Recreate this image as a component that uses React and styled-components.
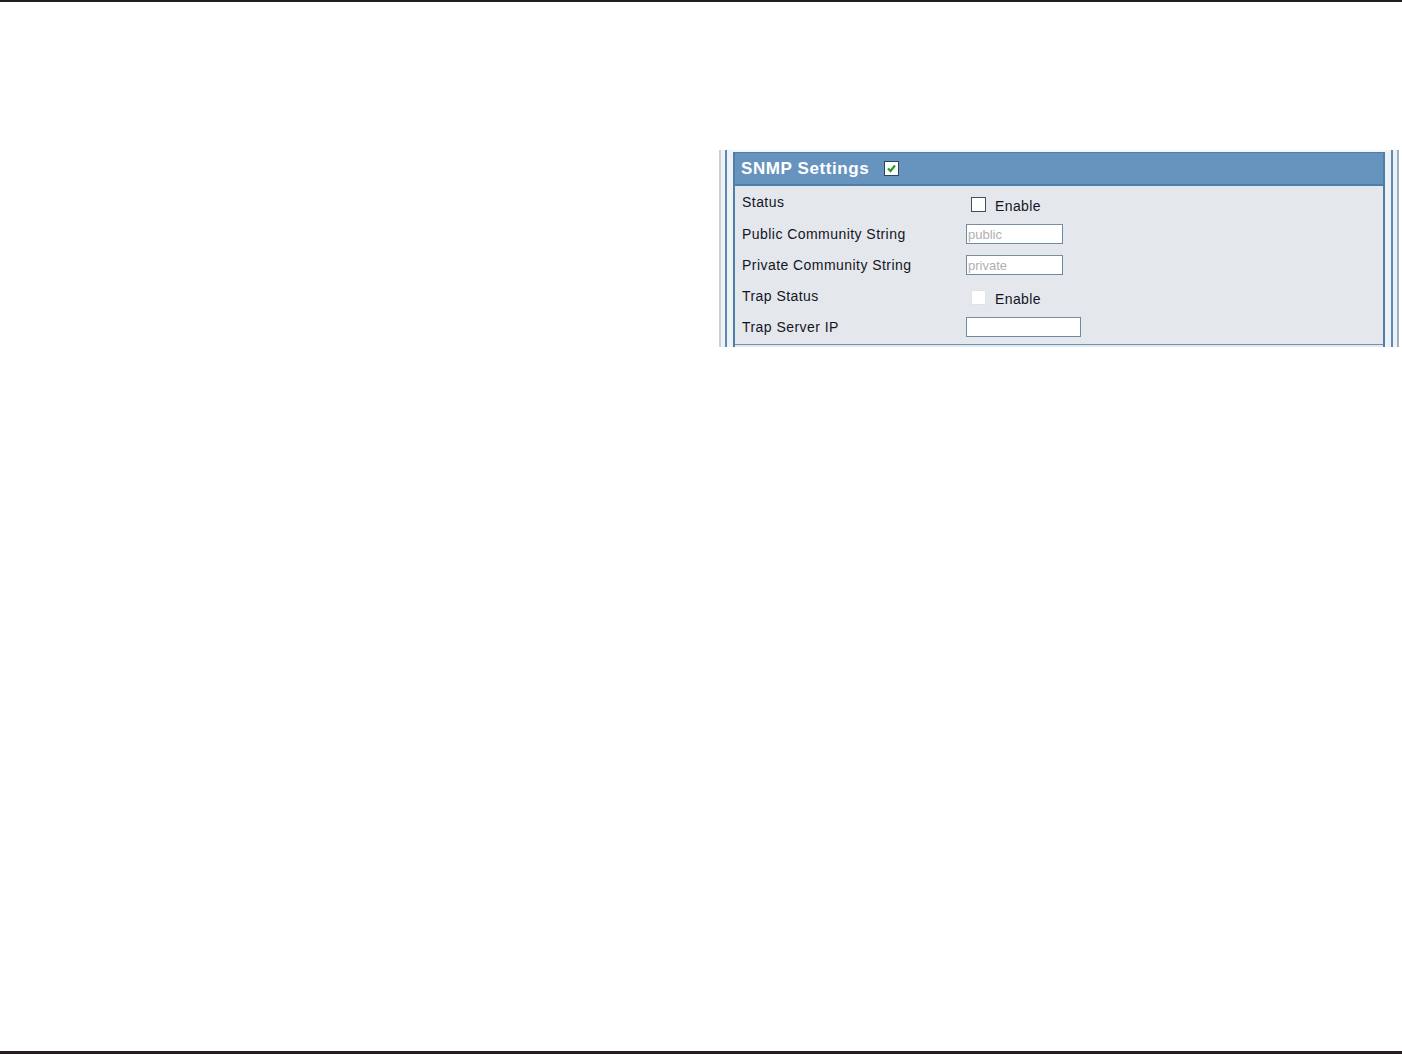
import styled, { createGlobalStyle } from "styled-components";

const Global = createGlobalStyle`
  html, body {
    margin: 0;
    padding: 0;
    background: #ffffff;
  }
  body {
    font-family: "Liberation Sans", Arial, sans-serif;
  }
`;

const Page = styled.div`
  width: 1402px;
  height: 1054px;
  display: flex;
  flex-direction: column;
  box-sizing: border-box;
  border-top: 2px solid #231f20;
  border-bottom: 3px solid #231f20;
`;

const Content = styled.div`
  flex: 1;
  display: flex;
  justify-content: flex-end;
  padding: 148px 3px 0 0;
`;

const Frame = styled.div`
  width: 680px;
  height: 197px;
  display: flex;
  box-sizing: border-box;
  background: #f3f6f8;
  border-left: 2px solid #c8d0d6;
  border-right: 2px solid #9fb0c0;
  align-self: flex-start;
`;

const Rail = styled.div`
  width: 12px;
  display: flex;
  justify-content: center;
  background: #eef2f5;
  &::before {
    content: "";
    width: 2px;
    margin-left: ${(p) => p.shift}px;
    background: #5d8ab4;
  }
`;

const Panel = styled.div`
  flex: 1;
  display: flex;
  flex-direction: column;
  box-sizing: border-box;
  border: 2px solid #4f7ea9;
  border-top: 0;
  border-bottom: 0;
  background: #e4e8ec;
  margin-top: 2px;
`;

const Header = styled.div`
  height: 31px;
  display: flex;
  align-items: center;
  gap: 15px;
  padding: 0 6px;
  background: #6794bf;
  border-top: 1px solid #4f7ea9;
  border-bottom: 2px solid #4f7ea9;
  color: #ffffff;
  font-size: 17px;
  font-weight: bold;
  letter-spacing: 0.6px;
`;

const HeadCheck = styled.span`
  width: 13px;
  height: 13px;
  display: flex;
  align-items: center;
  justify-content: center;
  background: #ffffff;
  border: 1px solid #28465f;
`;

const Body = styled.div`
  display: grid;
  grid-template-columns: 224px 1fr;
  grid-auto-rows: 31px;
  padding: 3px 7px 0;
  border-bottom: 1px solid #6a93b8;
`;

const Label = styled.div`
  font-size: 14px;
  letter-spacing: 0.45px;
  color: #141425;
  display: flex;
  align-items: center;
  padding-top: ${(p) => (p.up ? 0 : 1)}px;
  height: 25px;
`;

const Cell = styled.div`
  display: flex;
  align-items: ${(p) => (p.top ? "flex-start" : "center")};
  height: 31px;
`;

const Box = styled.span`
  width: 13px;
  height: 13px;
  margin: 0 9px 0 5px;
  background: #ffffff;
  border: 1px solid ${(p) => (p.faint ? "#dfe3e7" : "#40505e")};
`;

const Enable = styled.span`
  font-size: 14px;
  letter-spacing: 0.4px;
  color: #141425;
  padding-top: 2px;
`;

const Field = styled.div`
  width: ${(p) => p.w}px;
  height: 20px;
  margin-top: 4px;
  box-sizing: border-box;
  background: #ffffff;
  border: 1px solid #6b8aa6;
  border-top-color: #7b8ea0;
  font-size: 13px;
  color: #b0b0b0;
  padding-left: 1px;
  display: flex;
  align-items: center;
`;

export default function App() {
  return (
    <Page>
      <Global />
      <Content>
        <Frame>
          <Rail shift={-2} />
          <Panel>
            <Header>
              <span>SNMP Settings</span>
              <HeadCheck>
                <svg width="11" height="11" viewBox="0 0 11 11">
                  <path d="M2 5.5 L4.5 8 L9 2.5" fill="none" stroke="#2f9a2a" strokeWidth="2.2" />
                </svg>
              </HeadCheck>
            </Header>
            <Body>
              <Label up>Status</Label>
              <Cell>
                <Box />
                <Enable>Enable</Enable>
              </Cell>
              <Label>Public Community String</Label>
              <Cell top>
                <Field w={97}>public</Field>
              </Cell>
              <Label>Private Community String</Label>
              <Cell top>
                <Field w={97}>private</Field>
              </Cell>
              <Label>Trap Status</Label>
              <Cell>
                <Box faint />
                <Enable>Enable</Enable>
              </Cell>
              <Label>Trap Server IP</Label>
              <Cell top>
                <Field w={115} />
              </Cell>
            </Body>
          </Panel>
          <Rail shift={2} />
        </Frame>
      </Content>
    </Page>
  );
}
